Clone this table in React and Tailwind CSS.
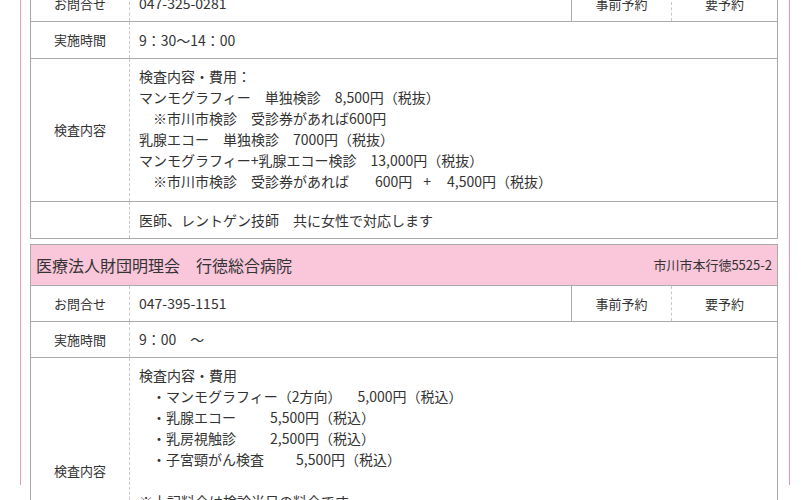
const font = "font-['Noto_Sans_CJK_JP','Noto_Sans',sans-serif]"

function Label({ children }) {
  return (
    <div className="flex w-[99px] shrink-0 items-center justify-center border-r border-dashed border-r-[#c8c8c8] text-[13px]">
      {children}
    </div>
  )
}

function ContactRow({ tel }) {
  return (
    <div className="flex h-[36px]">
      <Label>お問合せ</Label>
      <div className="flex w-[442px] items-center border-r border-[#aaa] pl-[9px] text-[14px]">{tel}</div>
      <div className="flex w-[100px] items-center justify-center border-r border-dashed border-r-[#c8c8c8] text-[13px]">
        事前予約
      </div>
      <div className="flex flex-1 items-center justify-center text-[13px]">要予約</div>
    </div>
  )
}

function Row({ label, children, tall, h = 'h-[36px]' }) {
  return (
    <div className={tall ? 'flex' : `flex ${h}`}>
      <Label>{label}</Label>
      <div className={tall ? 'flex-1 pl-[9px] pt-[7px] pb-[9px] text-[14px] leading-[21px]' : 'flex flex-1 items-center pl-[9px] text-[14px]'}>
        {children}
      </div>
    </div>
  )
}

export default function App() {
  return (
    <div className={`h-[500px] overflow-hidden bg-white text-[#333] ${font}`}>
      <div className="ml-[20px] h-full w-[770px] border-x border-l-[#e99abd] border-r-[#f78cbf] pl-[9px]">
        <div className="-mt-[15px] w-[748px] divide-y divide-[#aaa] border border-[#aaa]">
          <ContactRow tel="047-325-0281" />
          <Row label="実施時間" h="h-[37px]">9：30～14：00</Row>
          <Row label="検査内容" tall>
            <p>検査内容・費用：</p>
            <p>マンモグラフィー　単独検診　8,500円（税抜）</p>
            <p className="pl-[14px]">※市川市検診　受診券があれば600円</p>
            <p>乳腺エコー　単独検診　7000円（税抜）</p>
            <p>マンモグラフィー+乳腺エコー検診　13,000円（税抜）</p>
            <p className="pl-[14px]">
              ※市川市検診　受診券があれば<span className="ml-[26px]">600円</span>
              <span className="ml-[11px]">+</span>
              <span className="ml-[16px]">4,500円（税抜）</span>
            </p>
          </Row>
          <Row label="">医師、レントゲン技師　共に女性で対応します</Row>
        </div>

        <div className="mt-[5px] w-[748px] divide-y divide-[#aaa] border border-[#aaa]">
          <div className="flex h-[41px] items-center justify-between bg-[#f9c6da] px-[5px]">
            <h3 className="text-[16px]">医療法人財団明理会　行徳総合病院</h3>
            <span className="text-[13px]">市川市本行徳5525-2</span>
          </div>
          <ContactRow tel="047-395-1151" />
          <Row label="実施時間">9：00　～</Row>
          <Row label="検査内容" tall>
            <p>検査内容・費用</p>
            <p className="pl-[13px]">・マンモグラフィー（2方向）<span className="ml-[16px]">5,000円（税込）</span></p>
            <p className="pl-[13px]">・乳腺エコー<span className="ml-[34px]">5,500円（税込）</span></p>
            <p className="pl-[13px]">・乳房視触診<span className="ml-[34px]">2,500円（税込）</span></p>
            <p className="pl-[13px]">・子宮頸がん検査<span className="ml-[32px]">5,500円（税込）</span></p>
            <p>&nbsp;</p>
            <p>※上記料金は検診当日の料金です</p>
            <p className="pl-[14px]">市川市検診の受診券をお持ちの方は</p>
            <p className="pl-[14px]">受診券に記載の金額となります</p>
            <p>&nbsp;</p>
          </Row>
        </div>
      </div>
    </div>
  )
}
